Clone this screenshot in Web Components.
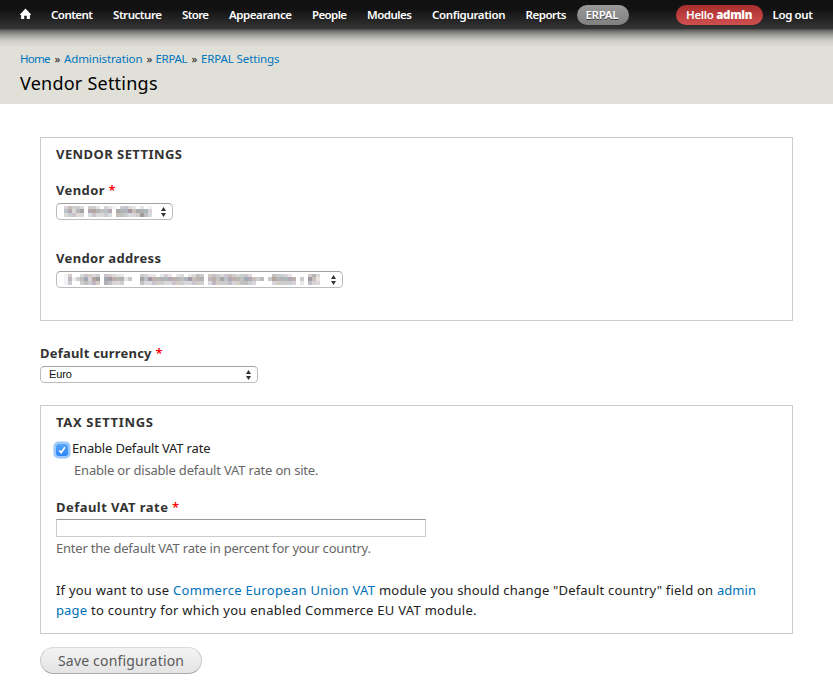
<!DOCTYPE html>
<html lang="en">
<head>
<meta charset="utf-8">
<title>Vendor Settings</title>
<style>
body{margin:0;background:#fff;color:#222;font:13px/20px "Noto Sans","Open Sans",sans-serif;height:698px;overflow:hidden}
</style>
</head>
<body>
<admin-page></admin-page>
<script>
const define=(name,html,setup)=>{
  const t=document.createElement('template');
  t.innerHTML=html;
  customElements.define(name,class extends HTMLElement{
    constructor(){super();this.attachShadow({mode:'open'}).append(t.content.cloneNode(true));}
    connectedCallback(){if(setup)setup(this,this.shadowRoot);}
  });
};

/* A single run of text tracked to a given measure */
define('text-run','<style>:host{display:inline-block;white-space:pre;vertical-align:top}</style><slot></slot>',(el)=>{
  const w=parseFloat(el.getAttribute('w'));
  const natural=el.getBoundingClientRect().width;
  el.style.letterSpacing=((w-natural)/(el.textContent.length-1))+'px';
  el.style.width=w+'px';
});

define('nav-item',`<style>
:host{display:block;box-sizing:border-box;height:20px;padding:0 10px;border-radius:10px;color:#fff;font-weight:600;font-size:11.5px;line-height:20px;white-space:nowrap}
:host([active]){background:linear-gradient(#999,#808080);text-shadow:0 1px 0 #333;padding:0 10px 0 9px}
:host([user]){background:linear-gradient(#a82e2e,#d05050)}
</style><slot></slot>`);

define('home-icon',`<style>:host{display:block;height:20px}svg{display:block;margin-top:3px}</style>
<svg width="11" height="12" viewBox="0 0 11 12"><path fill="#fff" d="M5.5 .5 11 6.4V7H9.9V11H6.8V7.8H4.2V11H1.1V7H0V6.4Z"/></svg>`);

define('admin-toolbar',`<style>
:host{display:flex;justify-content:space-between;box-sizing:border-box;height:29px;padding:5px 10px 0 10px;background:linear-gradient(#111 0,#111 30%,#353535 100%)}
nav{display:flex}
</style>
<nav>
<nav-item><home-icon></home-icon></nav-item>
<nav-item><text-run w="42">Content</text-run></nav-item>
<nav-item><text-run w="49">Structure</text-run></nav-item>
<nav-item><text-run w="27">Store</text-run></nav-item>
<nav-item><text-run w="63">Appearance</text-run></nav-item>
<nav-item><text-run w="35">People</text-run></nav-item>
<nav-item><text-run w="45">Modules</text-run></nav-item>
<nav-item><text-run w="73.5">Configuration</text-run></nav-item>
<nav-item><text-run w="41">Reports</text-run></nav-item>
<nav-item active><text-run w="33">ERPAL</text-run></nav-item>
</nav>
<nav>
<nav-item user><text-run w="66.5">Hello <b>admin</b></text-run></nav-item>
<nav-item><text-run w="40.5">Log out</text-run></nav-item>
</nav>`);

define('page-branding',`<style>
:host{display:block;box-sizing:border-box;height:75px;padding:22px 20px 0;background:linear-gradient(rgba(0,0,0,.66) 0,rgba(0,0,0,.45) 3px,rgba(0,0,0,.25) 7px,rgba(0,0,0,.08) 12px,transparent 18px),#e0e0d8}
.crumbs{display:flex;gap:4px;font-size:11.5px;line-height:16px;color:#222}
a{color:#0074bd}
h1{margin:4px 0 0;font-weight:400;font-size:18px;line-height:24px;color:#000}
</style>
<div class="crumbs"><a><text-run w="30.5">Home</text-run></a><text-run w="5.5">»</text-run><a><text-run w="78.5">Administration</text-run></a><text-run w="5">»</text-run><a><text-run w="32">ERPAL</text-run></a><text-run w="5.5">»</text-run><a><text-run w="78.5">ERPAL Settings</text-run></a></div>
<h1><text-run w="137.5">Vendor Settings</text-run></h1>`);

define('form-fieldset',`<style>
:host{display:block;box-sizing:border-box;width:753px;border:1px solid #ccc;padding:6px 15px 0}
.legend{height:20px;font-weight:700;color:#333}
</style><div class="legend"><slot name="legend"></slot></div><slot></slot>`);

define('form-label',`<style>
:host{display:flex;gap:4px;height:20px;font-weight:700;color:#333}
i{display:none;font-style:normal;color:#f00;font-weight:600}
:host([required]) i{display:block}
</style><slot></slot><i>*</i>`);

define('select-box',`<style>
:host{display:flex;justify-content:space-between;align-items:center;box-sizing:border-box;height:17px;margin-top:3px;padding:0 6px 0 8px;border:1px solid #bcbcbc;border-top-color:#a0a0a0;border-radius:4.5px;background:#fff;font:11px/15px "Liberation Sans",Arial,sans-serif;color:#111}
svg{display:block}
</style><slot></slot><svg width="5" height="10" viewBox="0 0 5 10"><path fill="#333" d="M2.5 0 5 4H0ZM0 6h5L2.5 10Z"/></svg>`);

/* Redacted value: each digit is the darkness of one mosaic cell */
define('mosaic-text','<style>:host{display:block;margin-left:-1px}svg{display:block}</style><svg shape-rendering="crispEdges"></svg>',(el,root)=>{
  const rows=el.getAttribute('rows').split('/');
  const tint=[[150,135,150],[155,155,155],[145,155,165],[165,150,140],[150,150,150]];
  const svg=root.querySelector('svg');
  svg.setAttribute('width',rows[0].length*4);svg.setAttribute('height',11);
  svg.innerHTML=rows.map((r,y)=>[...r].map((d,x)=>{
    const c=tint[(x*3+y*2)%5],k=d/9*1.1;
    const f=c.map(v=>Math.round(255-(255-v)*k));
    return `<rect x="${x*4}" y="${[0,3,7][y]}" width="4" height="4" fill="rgb(${f})"/>`;
  }).join('')).join('');
});

define('check-box',`<style>
:host{display:block;box-sizing:border-box;width:12px;height:12px;border-radius:2.5px;background:linear-gradient(#58a6fb,#2b86f8);box-shadow:0 0 0 2.5px #9cc8fa}
svg{display:block}
</style><svg width="12" height="12" viewBox="0 0 12 12"><path d="M3.2 6.4 5.2 8.6 8.9 3.3" fill="none" stroke="#fff" stroke-width="1.6"/></svg>`);

define('text-input','<style>:host{display:block;box-sizing:border-box;width:370px;height:18px;border:1px solid #ccc;border-top-color:#999;background:#fff}</style>');

define('help-text','<style>:host{display:block;height:20px;color:#666}</style><slot></slot>');

define('form-button',`<style>
:host{display:block;box-sizing:border-box;width:162px;height:27px;padding:0 17px;border:1px solid #ccc;border-color:#dadada #c8c8c8 #aaa;border-radius:14px;background:linear-gradient(#f3f3f3,#e4e4e4);font-size:14px;line-height:25px;color:#5a5a5a}
</style><slot></slot>`);

define('admin-page',`<style>
:host{display:block}
main{display:block;padding:33px 40px 0}
a{color:#0071b8}
.check{display:flex;align-items:center;height:20px;margin-top:6px;gap:4px}
check-box{margin-top:4px}
.para{margin:22px 0 0;color:#222}
.line{display:flex;gap:4px;height:20px}
</style>
<admin-toolbar></admin-toolbar>
<page-branding></page-branding>
<main>
<form-fieldset style="height:184px">
<text-run slot="legend" w="126">VENDOR SETTINGS</text-run>
<form-label required style="margin-top:16px"><text-run w="48.5">Vendor</text-run></form-label>
<select-box style="width:117px"><mosaic-text rows="3544304420321044320201/5636706765560766757663/3443303433430554334853"></mosaic-text></select-box>
<form-label style="margin-top:28px"><text-run w="105">Vendor address</text-run></form-label>
<select-box style="width:287px"><mosaic-text rows="1400344340443220000432202320230235404543454344300000544320000463/1514573780776662400757666666656756605657566657654504766666040752/1400454540653340000533444334443344403544453455430000344443020533"></mosaic-text></select-box>
</form-fieldset>
<form-label required style="margin-top:22px"><text-run w="111.5">Default currency</text-run></form-label>
<select-box style="width:218px"><text-run w="23">Euro</text-run></select-box>
<form-fieldset style="height:229px;margin-top:22px">
<text-run slot="legend" w="97">TAX SETTINGS</text-run>
<div class="check"><check-box></check-box><text-run w="138.5">Enable Default VAT rate</text-run></div>
<help-text style="margin:2px 0 0 18px"><text-run w="244.5">Enable or disable default VAT rate on site.</text-run></help-text>
<form-label required style="margin-top:17px"><text-run w="112">Default VAT rate</text-run></form-label>
<text-input style="margin-top:2px"></text-input>
<help-text style="margin-top:1px"><text-run w="315">Enter the default VAT rate in percent for your country.</text-run></help-text>
<div class="para">
<div class="line"><text-run w="113">If you want to use</text-run><a><text-run w="202">Commerce European Union VAT</text-run></a><text-run w="334">module you should change "Default country" field on</text-run><a><text-run w="39">admin</text-run></a></div>
<div class="line"><a><text-run w="31">page</text-run></a><text-run w="385.5">to country for which you enabled Commerce EU VAT module.</text-run></div>
</div>
</form-fieldset>
<form-button style="margin-top:13px"><text-run w="126">Save configuration</text-run></form-button>
</main>`);
</script>
</body>
</html>
